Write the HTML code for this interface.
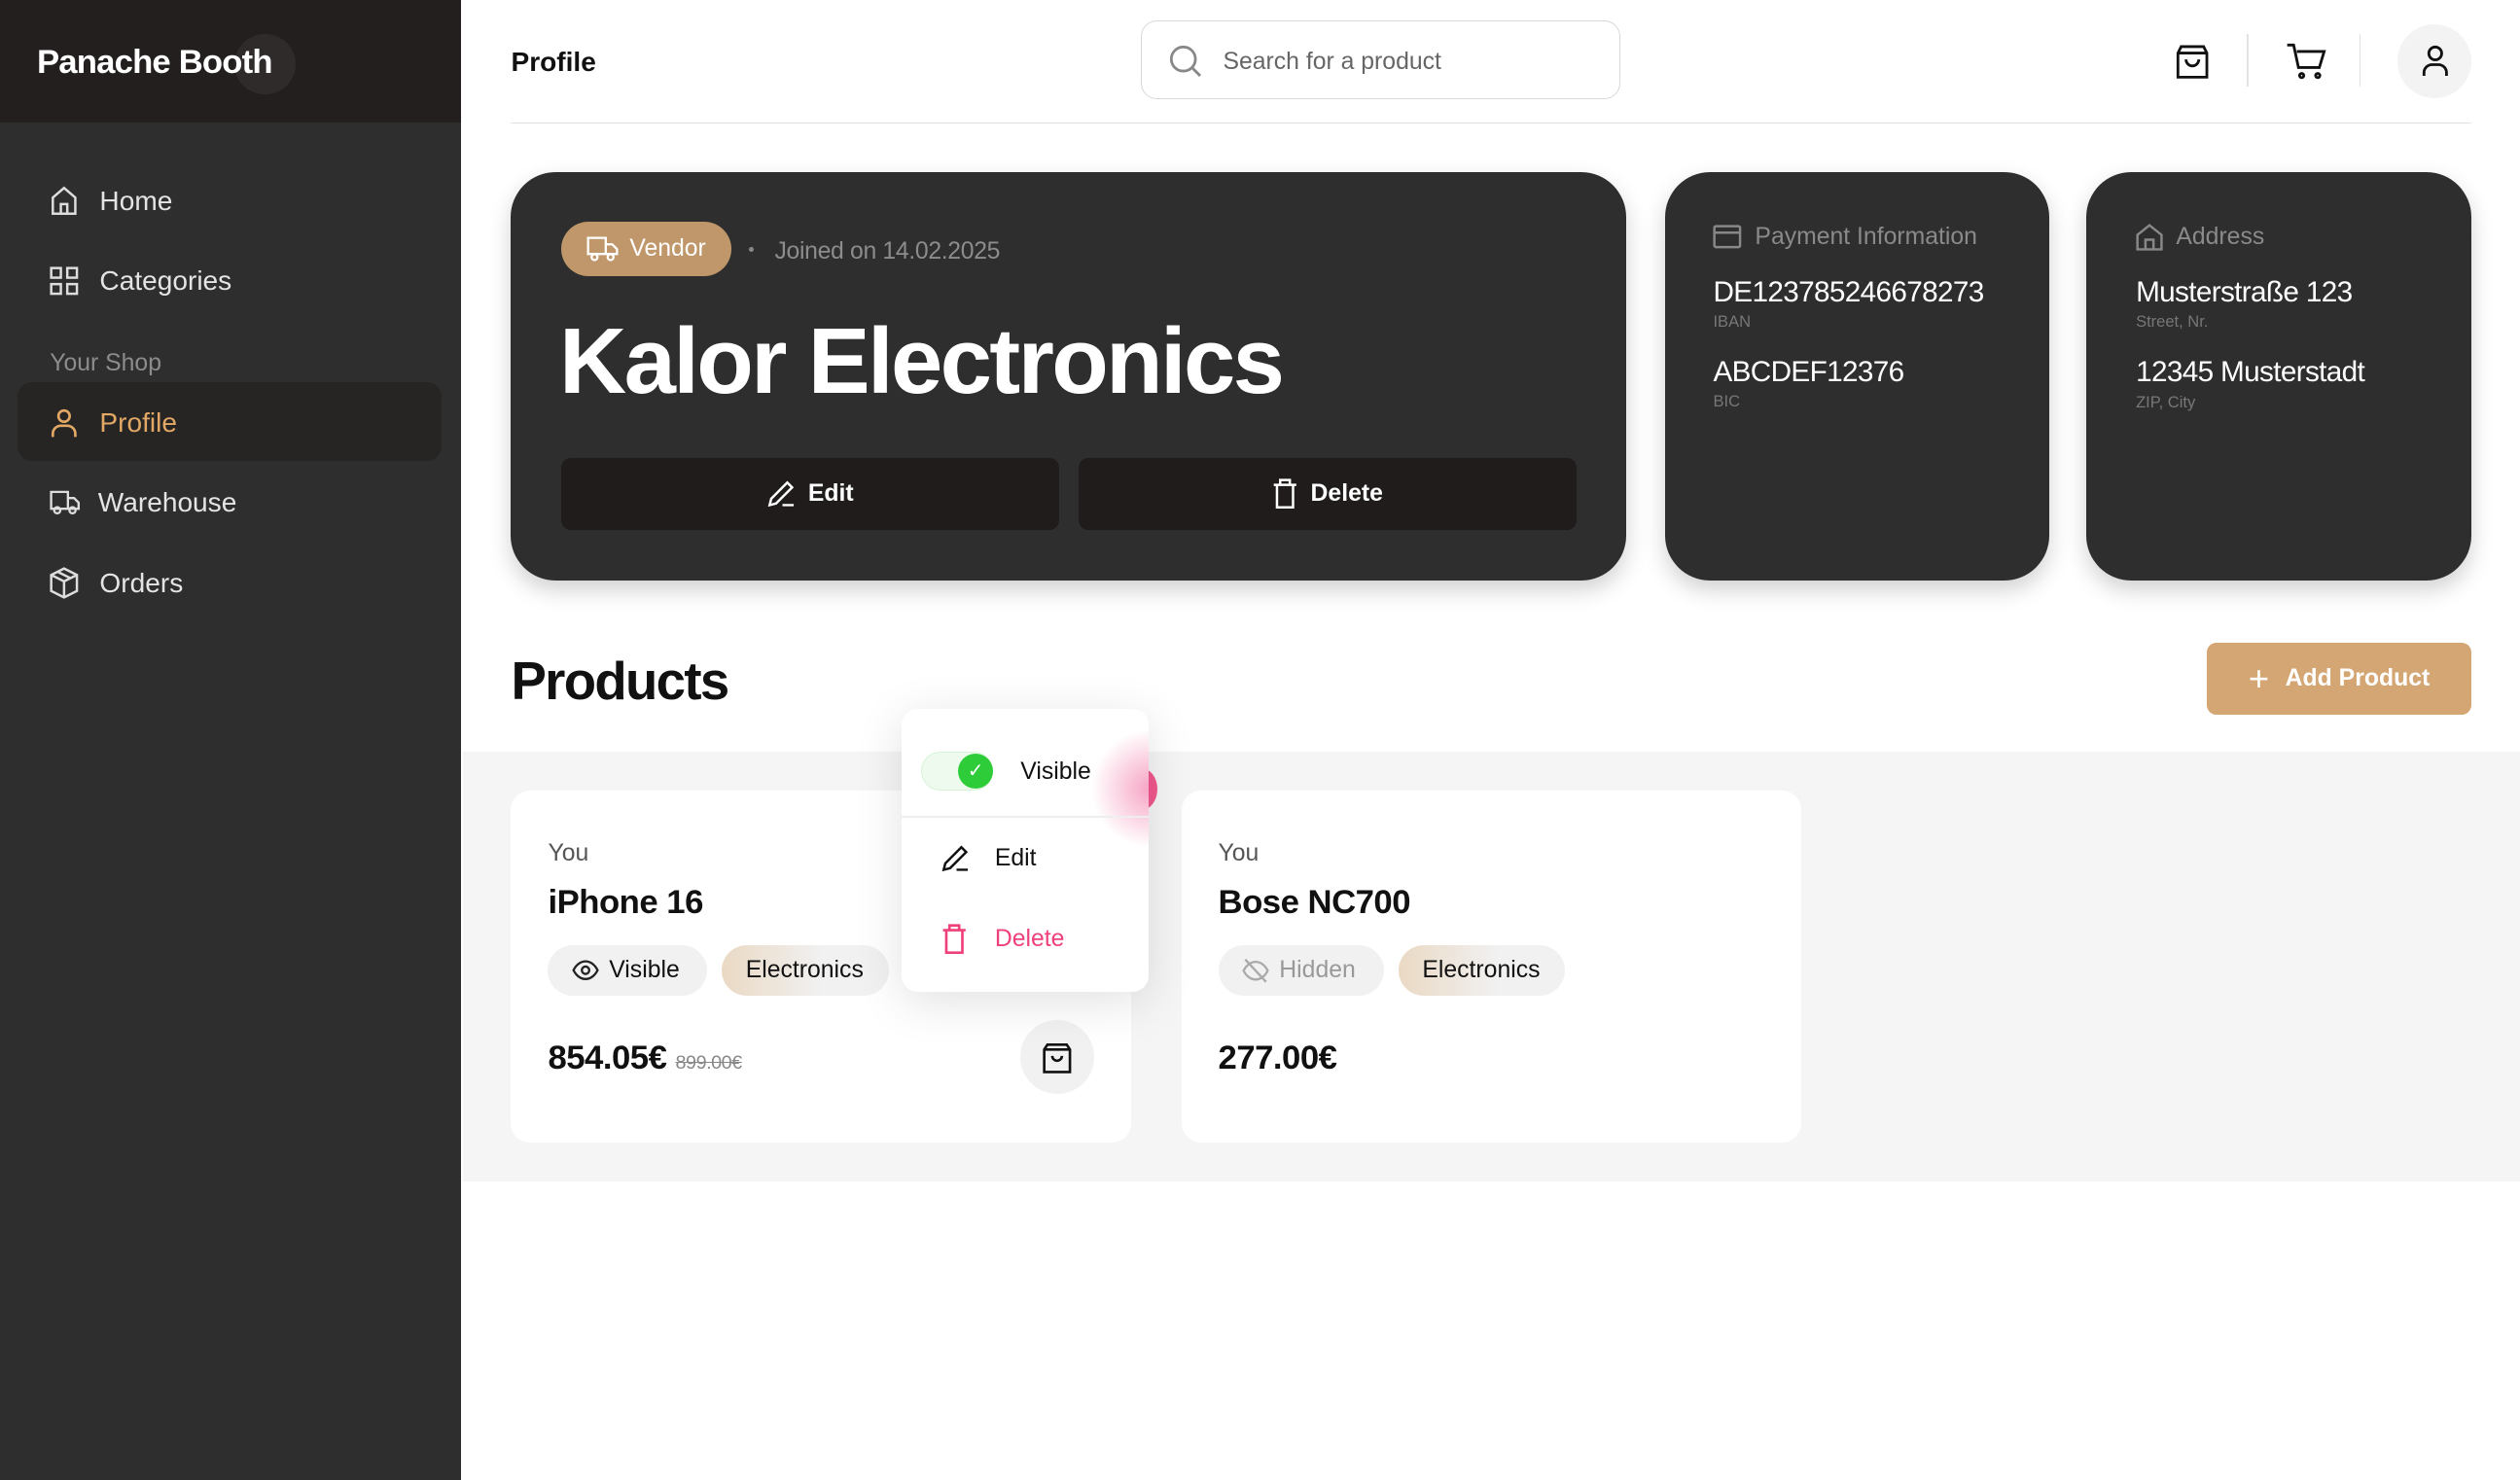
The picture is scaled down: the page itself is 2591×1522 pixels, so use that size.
<!DOCTYPE html>
<html><head><meta charset="utf-8"><style>
html,body{margin:0;padding:0;background:#fff;overflow:hidden}
#r{width:1568px;height:921px;position:relative;zoom:1.65242;font-family:"Liberation Sans",sans-serif;color:#111}
.a{position:absolute}
svg{display:block}
.nav{position:absolute;left:31px;display:flex;align-items:center;gap:13px;font-size:17px;color:#e4e4e4}
.dk{position:absolute;background:#2e2e2e;border-radius:28px;box-shadow:0 6px 14px rgba(0,0,0,.18)}
.lbl{font-size:15px;color:#8a8a8a;display:flex;align-items:center;gap:8px}
.big{font-size:18px;color:#fff;letter-spacing:-.4px}
.sm{font-size:10px;color:#777;margin-top:2px}
.card{position:absolute;background:#fff;border-radius:12px;top:492px;width:386px;height:219px}
.chip{position:absolute;top:588px;height:32px;border-radius:16px;background:#f1f1f1;display:flex;align-items:center;gap:6px;padding:0 15px;font-size:15px;box-sizing:border-box}
</style></head><body><div id="r">
<div class="a" style="left:0;top:0;width:287px;height:921px;background:#2e2e2e"></div>
<div class="a" style="left:0;top:0;width:287px;height:76px;background:#231f1f"></div>
<div class="a" style="left:146px;top:21px;width:38px;height:38px;border-radius:50%;background:#2f2b2b"></div>
<div class="a" style="left:23px;top:27px;font-size:21px;font-weight:bold;color:#fff;letter-spacing:-.5px">Panache Booth</div>
<div class="nav" style="top:115px"><svg width="18" height="20" viewBox="0 0 18 20" fill="none" stroke="#ddd" stroke-width="1.5"><path d="M2 8L9 2l7 6v10H2z M7 18v-6h4v6"/></svg>Home</div>
<div class="nav" style="top:165px"><svg width="18" height="18" viewBox="0 0 18 18" fill="none" stroke="#ddd" stroke-width="1.5"><rect x="1" y="1" width="6" height="6"/><rect x="11" y="1" width="6" height="6"/><rect x="1" y="11" width="6" height="6"/><rect x="11" y="11" width="6" height="6"/></svg>Categories</div>
<div class="a" style="left:31px;top:218px;font-size:15px;color:#8c8c8c">Your Shop</div>
<div class="a" style="left:11px;top:238px;width:264px;height:49px;border-radius:9px;background:#262524"></div>
<div class="nav" style="top:253px;color:#e3a865"><svg width="18" height="20" viewBox="0 0 18 20" fill="none" stroke="#e3a865" stroke-width="1.6"><circle cx="9" cy="6" r="3.5"/><path d="M2 19v-2a5 5 0 0 1 5-5h4a5 5 0 0 1 5 5v2"/></svg>Profile</div>
<div class="nav" style="top:303px;gap:11px"><svg width="19" height="18" viewBox="0 0 20 18" fill="none" stroke="#ddd" stroke-width="1.5"><path d="M1 2h11v11H1z M12 6h4l3 3v4h-7"/><circle cx="5" cy="14" r="2"/><circle cx="15" cy="14" r="2"/></svg>Warehouse</div>
<div class="nav" style="top:353px"><svg width="18" height="20" viewBox="0 0 18 20" fill="none" stroke="#ddd" stroke-width="1.5"><path d="M9 1l8 4v10l-8 4-8-4V5z M1 5l8 4 8-4 M9 9v10 M5 3l8 4"/></svg>Orders</div>
<div class="a" style="left:318px;top:29px;font-size:17px;font-weight:bold">Profile</div>
<div class="a" style="left:710px;top:13px;width:298px;height:49px;border:1px solid #d8d8d8;border-radius:10px;box-sizing:border-box"></div>
<svg class="a" style="left:727px;top:27px" width="22" height="22" viewBox="0 0 22 22" fill="none" stroke="#888" stroke-width="1.7"><circle cx="9.5" cy="9.5" r="7.5"/><path d="M15 15l5 5"/></svg>
<div class="a" style="left:761px;top:30px;font-size:15px;color:#666">Search for a product</div>
<svg class="a" style="left:1353px;top:26px" width="22" height="24" viewBox="0 0 22 24" fill="none" stroke="#111" stroke-width="1.7"><path d="M4 3h14l2 4v15H2V7z M2 7h18 M7 11a4 4 0 0 0 8 0"/></svg>
<div class="a" style="left:1398px;top:21px;width:1px;height:33px;background:#e3e3e3"></div>
<svg class="a" style="left:1422px;top:26px" width="26" height="24" viewBox="0 0 26 24" fill="none" stroke="#111" stroke-width="1.7"><path d="M1 2h4l3 14h13l3-10H7"/><circle cx="10" cy="21" r="1.3"/><circle cx="20" cy="21" r="1.3"/></svg>
<div class="a" style="left:1468px;top:21px;width:1px;height:33px;background:#e3e3e3"></div>
<div class="a" style="left:1492px;top:15px;width:46px;height:46px;border-radius:50%;background:#f3f3f3"></div>
<svg class="a" style="left:1506px;top:27px" width="18" height="21" viewBox="0 0 18 21" fill="none" stroke="#111" stroke-width="1.7"><circle cx="9" cy="6" r="4"/><path d="M2 20v-2a5 5 0 0 1 5-5h4a5 5 0 0 1 5 5v2"/></svg>
<div class="a" style="left:318px;top:76px;width:1220px;height:1px;background:#e2e2e2"></div>
<div class="dk" style="left:318px;top:107px;width:694px;height:254px"></div>
<div class="a" style="left:349px;top:138px;width:106px;height:34px;border-radius:17px;background:#c0976b;display:flex;align-items:center;justify-content:center;gap:7px;color:#fff;font-size:15px"><svg width="20" height="16" viewBox="0 0 20 16" fill="none" stroke="#fff" stroke-width="1.4"><path d="M1 1h11v10H1z M12 5h4l3 3v3h-7"/><circle cx="5" cy="13" r="1.8"/><circle cx="15" cy="13" r="1.8"/></svg>Vendor</div>
<div class="a" style="left:466px;top:154px;width:3px;height:3px;border-radius:50%;background:#888"></div>
<div class="a" style="left:482px;top:148px;font-size:15px;color:#8c8c8c;letter-spacing:-.2px">Joined on 14.02.2025</div>
<div class="a" style="left:348px;top:192px;font-size:58px;font-weight:bold;color:#fff;letter-spacing:-1.6px">Kalor Electronics</div>
<div class="a" style="left:349px;top:285px;width:310px;height:45px;border-radius:6px;background:#201c1c;display:flex;align-items:center;justify-content:center;gap:8px;color:#fff;font-size:15px;font-weight:bold"><svg width="18" height="18" viewBox="0 0 18 18" fill="none" stroke="#fff" stroke-width="1.5"><path d="M2 16l1-4L13 2l3 3L6 15z M10 16h7"/></svg>Edit</div>
<div class="a" style="left:671px;top:285px;width:310px;height:45px;border-radius:6px;background:#201c1c;display:flex;align-items:center;justify-content:center;gap:8px;color:#fff;font-size:15px;font-weight:bold"><svg width="16" height="19" viewBox="0 0 16 19" fill="none" stroke="#fff" stroke-width="1.5"><path d="M1 4h14 M5 4V1h6v3 M3 4v14h10V4"/></svg>Delete</div>
<div class="dk" style="left:1036px;top:107px;width:239px;height:254px"></div>
<div class="a" style="left:1066px;top:139px"><div class="lbl"><svg width="18" height="15" viewBox="0 0 18 15" fill="none" stroke="#888" stroke-width="1.5"><rect x="1" y="1" width="16" height="13" rx="1"/><path d="M1 5h16"/></svg>Payment Information</div>
<div class="big" style="margin-top:16px">DE123785246678273</div><div class="sm">IBAN</div>
<div class="big" style="margin-top:15px">ABCDEF12376</div><div class="sm">BIC</div></div>
<div class="dk" style="left:1298px;top:107px;width:240px;height:254px"></div>
<div class="a" style="left:1329px;top:139px"><div class="lbl"><svg width="17" height="17" viewBox="0 0 17 17" fill="none" stroke="#888" stroke-width="1.5"><path d="M1 7l7.5-6L16 7v9H1z M6 16v-6h5v6"/></svg>Address</div>
<div class="big" style="margin-top:16px">Musterstraße 123</div><div class="sm">Street, Nr.</div>
<div class="big" style="margin-top:15px">12345 Musterstadt</div><div class="sm">ZIP, City</div></div>
<div class="a" style="left:318px;top:405px;font-size:33px;font-weight:bold;letter-spacing:-1px">Products</div>
<div class="a" style="left:1373px;top:400px;width:165px;height:45px;border-radius:6px;background:#d4a674;display:flex;align-items:center;justify-content:center;gap:10px;color:#fff;font-size:15px;font-weight:bold"><span style="font-size:22px;font-weight:normal">+</span>Add Product</div>
<div class="a" style="left:288px;top:468px;width:1280px;height:267px;background:#f5f5f5"></div>
<div class="card" style="left:318px"></div>
<div class="card" style="left:735px"></div>
<div class="a" style="left:341px;top:523px;font-size:15px;color:#555">You</div>
<div class="a" style="left:341px;top:550px;font-size:21px;font-weight:bold;letter-spacing:-.3px">iPhone 16</div>
<div class="chip" style="left:341px;width:99px"><svg width="17" height="13" viewBox="0 0 17 13" fill="none" stroke="#222" stroke-width="1.4"><path d="M1 6.5C3 2.5 6 1 8.5 1s5.5 1.5 7.5 5.5c-2 4-5 5.5-7.5 5.5S3 10.5 1 6.5z"/><circle cx="8.5" cy="6.5" r="2.3"/></svg>Visible</div>
<div class="chip" style="left:449px;width:104px;background:linear-gradient(90deg,#ead9c4,#f1f1f1 60%)">Electronics</div>
<div class="a" style="left:341px;top:647px;font-size:21px;font-weight:bold;letter-spacing:-.3px">854.05€ <span style="font-size:12px;font-weight:normal;color:#888;text-decoration:line-through">899.00€</span></div>
<div class="a" style="left:635px;top:635px;width:46px;height:46px;border-radius:50%;background:#f1f1f1"></div>
<svg class="a" style="left:649px;top:648px" width="18" height="20" viewBox="0 0 18 20" fill="none" stroke="#111" stroke-width="1.6"><path d="M3 2h12l2 3v14H1V5z M1 5h16 M6 9a3 3 0 0 0 6 0"/></svg>
<div class="a" style="left:758px;top:523px;font-size:15px;color:#555">You</div>
<div class="a" style="left:758px;top:550px;font-size:21px;font-weight:bold;letter-spacing:-.3px">Bose NC700</div>
<div class="chip" style="left:758px;width:103px;color:#999"><svg width="17" height="16" viewBox="0 0 17 16" fill="none" stroke="#aaa" stroke-width="1.4"><path d="M1 8C3 4 6 2.5 8.5 2.5s5.5 1.5 7.5 5.5c-2 4-5 5.5-7.5 5.5S3 12 1 8z M2 1l13 14"/></svg>Hidden</div>
<div class="chip" style="left:870px;width:104px;background:linear-gradient(90deg,#ead9c4,#f1f1f1 60%)">Electronics</div>
<div class="a" style="left:758px;top:647px;font-size:21px;font-weight:bold;letter-spacing:-.3px">277.00€</div>
<div class="a" style="left:700px;top:478px;width:20px;height:26px;border-radius:50%;background:#f2588d"></div>
<div class="a" style="left:561px;top:441px;width:154px;height:176px;background:#fff;border-radius:10px;box-shadow:0 6px 30px rgba(0,0,0,.12);overflow:hidden">
<div class="a" style="left:115px;top:10px;width:80px;height:80px;border-radius:50%;background:radial-gradient(#f6a3c3,rgba(255,255,255,0) 65%)"></div>
<div class="a" style="left:0;top:67px;width:154px;height:1px;background:#eee"></div>
<div class="a" style="left:12px;top:27px;width:45px;height:24px;border-radius:12px;background:#effaef;border:1px solid #d6f3d6;box-sizing:border-box"></div>
<div class="a" style="left:35px;top:28px;width:22px;height:22px;border-radius:50%;background:#2fcc3a;color:#fff;font-size:12px;text-align:center;line-height:22px">✓</div>
<div class="a" style="left:74px;top:31px;font-size:15px">Visible</div>
<svg class="a" style="left:24px;top:84px" width="18" height="18" viewBox="0 0 18 18" fill="none" stroke="#111" stroke-width="1.5"><path d="M2 16l1-4L13 2l3 3L6 15z M10 16h7"/></svg>
<div class="a" style="left:58px;top:85px;font-size:15px">Edit</div>
<svg class="a" style="left:25px;top:134px" width="16" height="19" viewBox="0 0 16 19" fill="none" stroke="#f0407a" stroke-width="1.6"><path d="M1 4h14 M5 4V1h6v3 M3 4v14h10V4"/></svg>
<div class="a" style="left:58px;top:135px;font-size:15px;color:#f0407a">Delete</div>
</div>
</div></body></html>
